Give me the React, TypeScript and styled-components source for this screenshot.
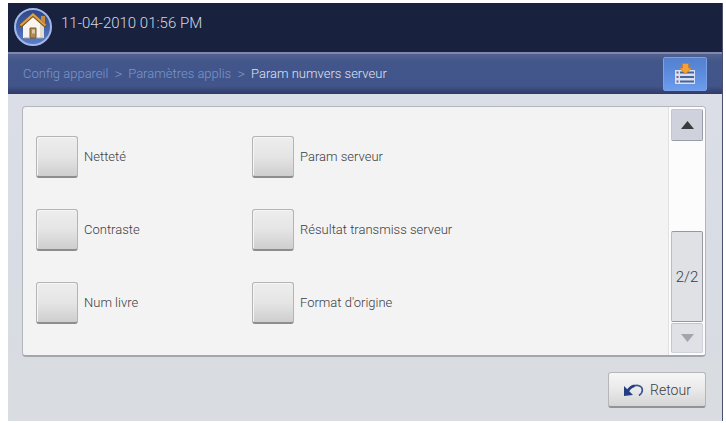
import React from "react";
import styled, { createGlobalStyle } from "styled-components";

const GlobalStyle = createGlobalStyle`
  *, *::before, *::after { box-sizing: border-box; }
  body { margin: 0; background: #fff; }
  button { font: inherit; color: inherit; margin: 0; padding: 0; cursor: pointer; }
`;

const Page = styled.div`
  min-height: 100vh;
  padding: 3px 3px 2px 8px;
  display: flex;
  font-family: Roboto, "Liberation Sans", sans-serif;
  font-weight: 300;
  font-size: 13px;
  line-height: 16px;
  color: #3c3c3e;
`;

const Screen = styled.div`
  flex: 1;
  min-width: 0;
  display: flex;
  flex-direction: column;
  background: linear-gradient(#dcdfe8, #d8dce5 60%, #d9dce0);
  border-right: 1px solid #4a506c;
`;

const StatusBar = styled.header`
  height: 49px;
  display: flex;
  align-items: flex-start;
  gap: 8px;
  padding: 4px 5px;
  background: #18213d;
  color: #d3d7e2;
`;

const HomeButton = styled.button`
  width: 40px;
  height: 40px;
  border: 0;
  background: none;
  svg { display: block; }
`;

const Clock = styled.time`
  font-size: 15px;
  padding-top: 8px;
`;

const TitleBar = styled.div`
  height: 42px;
  display: flex;
  align-items: center;
  justify-content: space-between;
  padding: 0 15px;
  border-top: 2px solid #8089ad;
  background: linear-gradient(#53618f, #42568a 20%, #42558a 80%, #303a66);
`;

const Trail = styled.nav`
  display: flex;
  align-items: center;
  gap: 6px;
  color: #7897cb;
  a { color: inherit; text-decoration: none; }
`;

const Separator = styled.span`
  font-size: 15px;
`;

const Current = styled.span`
  color: #dce4f6;
`;

const StatusButton = styled.button`
  width: 44px;
  height: 34px;
  display: grid;
  place-items: center;
  border: 1px solid #7aa0e6;
  border-radius: 2px;
  background: linear-gradient(#5480cd, #5c8cde 50%, #6c9ceb);
`;

const Content = styled.main`
  flex: 1;
  display: flex;
  flex-direction: column;
  padding: 12px 16px 13px 14px;
`;

const Panel = styled.section`
  display: flex;
  min-height: 251px;
  border: 1px solid #b3b6bd;
  border-bottom: 2px solid #a3a6ac;
  border-radius: 4px;
  background: #f3f3f3;
  overflow: hidden;
`;

const Options = styled.div`
  flex: 1;
  display: grid;
  grid-template-columns: 216px 1fr;
  grid-auto-rows: 42px;
  row-gap: 31px;
  padding: 29px 13px;
`;

const Option = styled.div`
  display: flex;
  align-items: center;
  gap: 6px;
`;

const Key = styled.button`
  width: 42px;
  height: 42px;
  border: 1px solid #b4b4b4;
  border-bottom: 2px solid #8d8d8d;
  border-radius: 3px;
  background: linear-gradient(#ededed, #e5e5e5 50%, #cecece);
  box-shadow: inset 1px 1px #f6f6f6;
`;

const Scroll = styled.div`
  width: 37px;
  display: flex;
  flex-direction: column;
  gap: 1px;
  padding: 2px;
  border-left: 1px solid #e0e1e5;
  background: #fcfcfd;
`;

const ScrollKey = styled.button<{ $dim?: boolean }>`
  height: ${(p) => (p.$dim ? 30 : 32)}px;
  display: grid;
  place-items: center;
  border: 1px solid ${(p) => (p.$dim ? "#d0d3db" : "#999ca8")};
  border-top-color: #c3c6d0;
  border-left-color: #c3c6d0;
  border-radius: 2px;
  background: ${(p) => (p.$dim ? "#dfe1e6" : "#cfd1dc")};
  color: ${(p) => (p.$dim ? "#a2a5ae" : "#3a3c40")};
`;

const Track = styled.div`
  flex: 1;
  display: flex;
  flex-direction: column;
  justify-content: flex-end;
`;

const Thumb = styled.div`
  height: 91px;
  display: grid;
  place-items: center;
  border: 1px solid #95989e;
  border-left-color: #b9bbc0;
  border-radius: 2px;
  background: #dfe1e4;
  font-size: 15px;
`;

const Actions = styled.footer`
  display: flex;
  justify-content: flex-end;
  padding-top: 15px;
`;

const BackButton = styled.button`
  width: 98px;
  height: 36px;
  display: flex;
  align-items: center;
  justify-content: center;
  gap: 6px;
  border: 1px solid #b5b6b9;
  border-bottom: 2px solid #929397;
  border-radius: 3px;
  background: linear-gradient(#f6f6f6, #e9e9e9 50%, #d5d5d6);
  font-size: 14px;
`;

const HomeIcon = () => (
  <svg width="40" height="40" viewBox="0 0 40 40" aria-hidden="true">
    <defs>
      <linearGradient id="disc" x1="0" y1="0" x2="0" y2="1">
        <stop offset="0" stopColor="#2c4687" />
        <stop offset="1" stopColor="#5a80cc" />
      </linearGradient>
    </defs>
    <circle cx="20" cy="20" r="18" fill="url(#disc)" stroke="#a3b8e8" strokeWidth="2" />
    <path d="M28 9h4v9h-4z" fill="#c98a35" />
    <path d="M10 19 20 9l11 10v12H10z" fill="#f8f5ee" />
    <path d="M27 31h4V19l-4-4z" fill="#e2ddd2" />
    <path d="M7 19.500 20 8l13 11.500" fill="none" stroke="#805019" strokeWidth="3.500" />
    <path d="M7.500 18.500 20 7.500l12.500 11" fill="none" stroke="#daa04a" strokeWidth="2.200" />
    <path d="M17 21h6v10h-6z" fill="#b38a51" stroke="#7b5a30" />
    <path d="M19 22.500h3v4h-3z" fill="#d9c9a8" />
    <path d="M11 31h6M23 31h7" stroke="#a9a594" />
  </svg>
);

const StatusIcon = () => (
  <svg width="24" height="24" viewBox="0 0 24 24" aria-hidden="true">
    <path d="M2 8h20v14H2z" fill="#d5e0f4" />
    <path d="M7 10.500h14M7 15h14M7 19.500h14" stroke="#4a6296" strokeWidth="1.800" />
    <path d="M3.500 10.500h2M3.500 15h2M3.500 19.500h2" stroke="#8a5964" strokeWidth="2" />
    <path d="M9.500 1.500h6v4.500h3L12.500 12 6.500 6h3z" fill="#f4a238" stroke="#c77b27" strokeWidth=".7" />
  </svg>
);

const Triangle = ({ down }: { down?: boolean }) => (
  <svg width="13" height="8" viewBox="0 0 13 8" aria-hidden="true">
    <path d={down ? "M0 0h13L6.500 8z" : "M0 8h13L6.500 0z"} fill="currentColor" />
  </svg>
);

const BackIcon = () => (
  <svg width="21" height="14" viewBox="0 0 21 14" aria-hidden="true">
    <path d="M1 3v10l9-1z" fill="#233f82" />
    <path d="M4.500 9C7 4 12 1.500 16 2.700c4.500 1.500 4.500 6.500 0 9.800" fill="none" stroke="#36538f" strokeWidth="1.600" />
    <path d="M4 9C6 5.500 8.500 3.500 11.500 2.800" fill="none" stroke="#233f82" strokeWidth="2.600" />
  </svg>
);

const OPTIONS = [
  "Netteté",
  "Param serveur",
  "Contraste",
  "Résultat transmiss serveur",
  "Num livre",
  "Format d'origine",
];

export default function App() {
  return (
    <Page>
      <GlobalStyle />
      <Screen>
        <StatusBar>
          <HomeButton aria-label="Accueil">
            <HomeIcon />
          </HomeButton>
          <Clock>11-04-2010 01:56 PM</Clock>
        </StatusBar>
        <TitleBar>
          <Trail>
            <a href="#config">Config appareil</a>
            <Separator>&gt;</Separator>
            <a href="#applis">Paramètres applis</a>
            <Separator>&gt;</Separator>
            <Current>Param numvers serveur</Current>
          </Trail>
          <StatusButton aria-label="État des tâches">
            <StatusIcon />
          </StatusButton>
        </TitleBar>
        <Content>
          <Panel>
            <Options>
              {OPTIONS.map((name, i) => (
                <Option key={name}>
                  <Key id={`option-${i}`} />
                  <label htmlFor={`option-${i}`}>{name}</label>
                </Option>
              ))}
            </Options>
            <Scroll>
              <ScrollKey aria-label="Page précédente">
                <Triangle />
              </ScrollKey>
              <Track>
                <Thumb>2/2</Thumb>
              </Track>
              <ScrollKey $dim aria-label="Page suivante">
                <Triangle down />
              </ScrollKey>
            </Scroll>
          </Panel>
          <Actions>
            <BackButton>
              <BackIcon />
              Retour
            </BackButton>
          </Actions>
        </Content>
      </Screen>
    </Page>
  );
}
